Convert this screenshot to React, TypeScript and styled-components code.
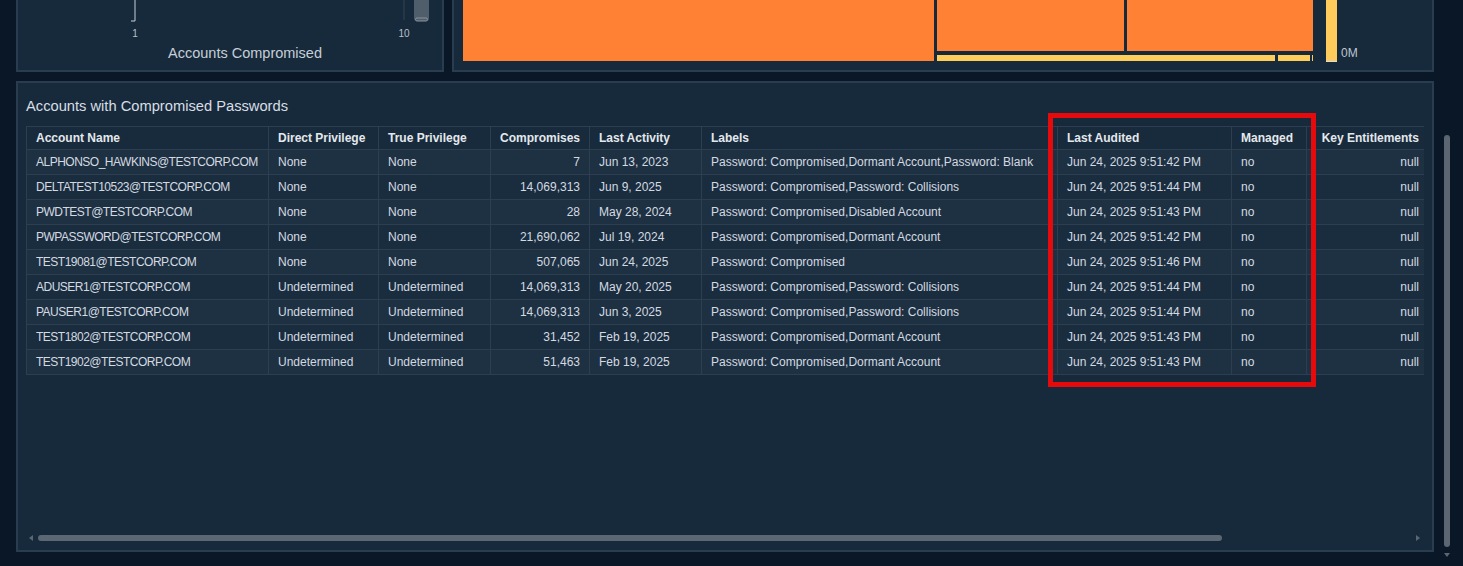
import styled, { createGlobalStyle } from "styled-components";

const GlobalStyle = createGlobalStyle`
  html, body { margin: 0; padding: 0; background: #0a1726; overflow: hidden; }
  body { font-family: "Liberation Sans", Arial, sans-serif; }
`

const Page = styled.div`
  position: relative;
  width: 1463px;
  height: 566px;
  display: flex;
  overflow: hidden;
  background: #0a1726;
`

const Main = styled.div`
  width: 1418px;
  margin-left: 16px;
  display: flex;
  flex-direction: column;
  gap: 9px;
`

const TopRow = styled.div`
  display: flex;
  gap: 8px;
  height: 72px;
`

const TopPanel = styled.div<{ $w: number }>`
  box-sizing: border-box;
  width: ${p => p.$w}px;
  height: 72px;
  background: #172a3c;
  border: 2px solid #2a3c4f;
  border-top: none;
  display: flex;
  flex-direction: column;
  justify-content: flex-end;
`

const AxisTitle = styled.div`
  height: 18px;
  line-height: 18px;
  margin-bottom: 8px;
  text-align: center;
  padding-left: 30px;
  font-size: 14.5px;
  color: #c6ced6;
`

const TreeWrap = styled.div`
  padding: 0 0 8px 9px;
  display: flex;
`

const BottomPanel = styled.div`
  box-sizing: border-box;
  height: 471px;
  background: #172a3c;
  border: 2px solid #2a3c4f;
  padding: 0 8px;
  display: flex;
  flex-direction: column;
`

const PanelTitle = styled.div`
  margin-top: 13px;
  margin-bottom: 10px;
  font-size: 14.7px;
  line-height: 20px;
  color: #d8dee4;
`

const TableClip = styled.div`
  width: 1398px;
  overflow: hidden;
  flex: 1;
`

const Table = styled.table`
  width: 1402px;
  table-layout: fixed;
  border-collapse: collapse;
  font-size: 12px;
`

const Th = styled.th<{ $right?: boolean }>`
  height: 22px;
  padding: 0 9px;
  text-align: ${p => (p.$right ? "right" : "left")};
  font-weight: bold;
  color: #e4e8ec;
  background: #182b3d;
  border: 1px solid #2c3e50;
  white-space: nowrap;
  overflow: hidden;
`

const Row = styled.tr<{ $odd: boolean }>`
  background: ${p => (p.$odd ? "#1e3143" : "#1a2d3f")};
`

const Td = styled.td<{ $right?: boolean; $caps?: boolean }>`
  height: 24px;
  padding: 0 9px;
  text-align: ${p => (p.$right ? "right" : "left")};
  letter-spacing: ${p => (p.$caps ? "-0.5px" : "normal")};
  color: #d4dae0;
  border: 1px solid #2c3e50;
  white-space: nowrap;
  overflow: hidden;
`

const HScroll = styled.div`
  height: 6px;
  margin-bottom: 9px;
  display: flex;
  align-items: center;
  width: 1398px;
`

const ArrowLeft = styled.span`
  width: 0;
  height: 0;
  margin-left: 3px;
  border-top: 3px solid transparent;
  border-bottom: 3px solid transparent;
  border-right: 4px solid #5b6773;
`

const ArrowRight = styled.span`
  width: 0;
  height: 0;
  margin-left: auto;
  margin-right: 4px;
  border-top: 3px solid transparent;
  border-bottom: 3px solid transparent;
  border-left: 4px solid #5b6773;
`

const HThumb = styled.div`
  width: 1184px;
  height: 6px;
  margin-left: 5px;
  border-radius: 3px;
  background: #5b6773;
`

const Rail = styled.div`
  width: 8px;
  margin-left: 9px;
  display: flex;
  flex-direction: column;
  align-items: center;
`

const VThumb = styled.div`
  width: 6px;
  height: 412px;
  margin-top: 135px;
  border-radius: 3px;
  background: #5b6672;
`

const ArrowDown = styled.span`
  width: 0;
  height: 0;
  margin-top: 6px;
  border-left: 3px solid transparent;
  border-right: 3px solid transparent;
  border-top: 4px solid #5b6672;
`

const Highlight = styled.div`
  position: absolute;
  left: 1048px;
  top: 113px;
  width: 268px;
  height: 274px;
  box-sizing: border-box;
  border: 5px solid #e60a0c;
  pointer-events: none;
`

const columns: { name: string; w: number; right?: boolean }[] = [
  { name: "Account Name", w: 242 },
  { name: "Direct Privilege", w: 110 },
  { name: "True Privilege", w: 112 },
  { name: "Compromises", w: 99, right: true },
  { name: "Last Activity", w: 112 },
  { name: "Labels", w: 356 },
  { name: "Last Audited", w: 174 },
  { name: "Managed", w: 75 },
  { name: "Key Entitlements", w: 122, right: true },
]

const rows = [
  ["ALPHONSO_HAWKINS@TESTCORP.COM", "None", "None", "7", "Jun 13, 2023", "Password: Compromised,Dormant Account,Password: Blank", "Jun 24, 2025 9:51:42 PM"],
  ["DELTATEST10523@TESTCORP.COM", "None", "None", "14,069,313", "Jun 9, 2025", "Password: Compromised,Password: Collisions", "Jun 24, 2025 9:51:44 PM"],
  ["PWDTEST@TESTCORP.COM", "None", "None", "28", "May 28, 2024", "Password: Compromised,Disabled Account", "Jun 24, 2025 9:51:43 PM"],
  ["PWPASSWORD@TESTCORP.COM", "None", "None", "21,690,062", "Jul 19, 2024", "Password: Compromised,Dormant Account", "Jun 24, 2025 9:51:42 PM"],
  ["TEST19081@TESTCORP.COM", "None", "None", "507,065", "Jun 24, 2025", "Password: Compromised", "Jun 24, 2025 9:51:46 PM"],
  ["ADUSER1@TESTCORP.COM", "Undetermined", "Undetermined", "14,069,313", "May 20, 2025", "Password: Compromised,Password: Collisions", "Jun 24, 2025 9:51:44 PM"],
  ["PAUSER1@TESTCORP.COM", "Undetermined", "Undetermined", "14,069,313", "Jun 3, 2025", "Password: Compromised,Password: Collisions", "Jun 24, 2025 9:51:44 PM"],
  ["TEST1802@TESTCORP.COM", "Undetermined", "Undetermined", "31,452", "Feb 19, 2025", "Password: Compromised,Dormant Account", "Jun 24, 2025 9:51:43 PM"],
  ["TEST1902@TESTCORP.COM", "Undetermined", "Undetermined", "51,463", "Feb 19, 2025", "Password: Compromised,Dormant Account", "Jun 24, 2025 9:51:43 PM"],
]

const HistogramAxis = () => (
  <svg width={424} height={44}>
    <path d="M117 0 V21 H113" stroke="#c9d0d6" strokeWidth={1} fill="none" />
    <line x1={386} y1={0} x2={386} y2={20} stroke="#334455" strokeWidth={1} />
    <rect x={396} y={-4} width={15} height={25} rx={3} fill="#505d6a" />
    <rect x={397.5} y={18} width={12} height={3} rx={1.5} fill="none" stroke="#8a949e" strokeWidth={1} />
    <text x={117} y={37} fontSize={10} fill="#b9c1c9" textAnchor="middle" fontFamily="Liberation Sans, sans-serif">1</text>
    <text x={386} y={37} fontSize={10} fill="#b9c1c9" textAnchor="middle" fontFamily="Liberation Sans, sans-serif">10</text>
  </svg>
)

const Treemap = () => (
  <svg width={960} height={62}>
    <rect x={0} y={0} width={471} height={61} fill="#ff8134" />
    <rect x={474} y={0} width={187} height={51} fill="#ff8134" />
    <rect x={664} y={0} width={186} height={51} fill="#ff8134" />
    <rect x={474} y={55} width={338} height={6} fill="#ffcd5a" />
    <rect x={815} y={55} width={32} height={6} fill="#ffcd5a" />
    <rect x={849} y={55} width={1} height={6} fill="#ffcd5a" />
    <rect x={863} y={0} width={11} height={62} fill="#ffcc5c" />
    <rect x={863} y={61} width={11} height={1} fill="#d9dde2" />
    <text x={878} y={57} fontSize={12} fill="#bcc5ce" fontFamily="Liberation Sans, sans-serif">0M</text>
  </svg>
)

function App() {
  return (
    <Page>
      <GlobalStyle />
      <Main>
        <TopRow>
          <TopPanel $w={428}>
            <HistogramAxis />
            <AxisTitle>Accounts Compromised</AxisTitle>
          </TopPanel>
          <TopPanel $w={982}>
            <TreeWrap>
              <Treemap />
            </TreeWrap>
          </TopPanel>
        </TopRow>
        <BottomPanel>
          <PanelTitle>Accounts with Compromised Passwords</PanelTitle>
          <TableClip>
            <Table>
              <colgroup>
                {columns.map(c => <col key={c.name} style={{ width: c.w }} />)}
              </colgroup>
              <thead>
                <tr>
                  {columns.map(c => <Th key={c.name} $right={c.right}>{c.name}</Th>)}
                </tr>
              </thead>
              <tbody>
                {rows.map((r, i) => (
                  <Row key={r[0]} $odd={i % 2 === 0}>
                    <Td $caps>{r[0]}</Td>
                    <Td>{r[1]}</Td>
                    <Td>{r[2]}</Td>
                    <Td $right>{r[3]}</Td>
                    <Td>{r[4]}</Td>
                    <Td>{r[5]}</Td>
                    <Td>{r[6]}</Td>
                    <Td>no</Td>
                    <Td $right>null</Td>
                  </Row>
                ))}
              </tbody>
            </Table>
          </TableClip>
          <HScroll>
            <ArrowLeft />
            <HThumb />
            <ArrowRight />
          </HScroll>
        </BottomPanel>
      </Main>
      <Rail>
        <VThumb />
        <ArrowDown />
      </Rail>
      <Highlight />
    </Page>
  )
}

export default App
